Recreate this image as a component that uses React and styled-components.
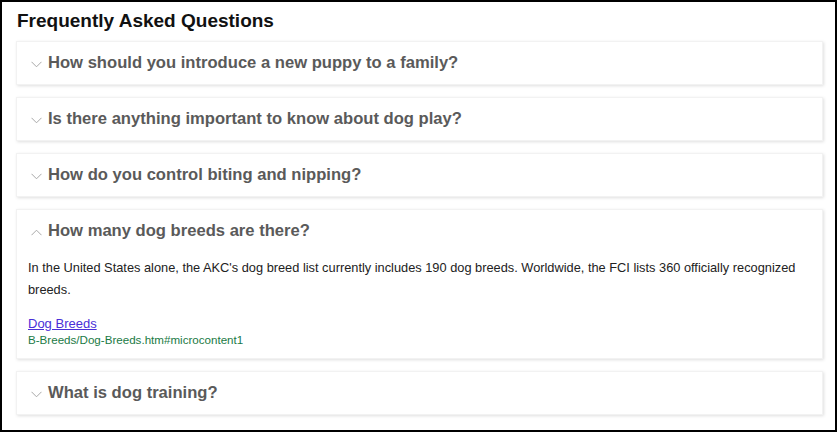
import React, { useState } from "react";
import styled, { createGlobalStyle } from "styled-components";

const Global = createGlobalStyle`
  html, body { margin: 0; padding: 0; background: #fff; }
  body { font-family: "Liberation Sans", Arial, sans-serif; }
  * { box-sizing: border-box; }
`;

const Frame = styled.div`
  width: 837px;
  height: 432px;
  border: 2px solid #000;
  padding: 8px 12px 0 14px;
  background: #fff;
`;

const Title = styled.h2`
  margin: 0 0 9px 1px;
  font-size: 19px;
  line-height: 22px;
  font-weight: bold;
  color: #111;
`;

const List = styled.div`
  display: flex;
  flex-direction: column;
  gap: 12px;
`;

const Card = styled.div`
  background: #fff;
  border: 1px solid #f2f2f2;
  box-shadow: 1px 1px 3px rgba(0, 0, 0, 0.13);
`;

const Header = styled.button`
  display: flex;
  align-items: center;
  gap: 6px;
  width: 100%;
  height: 42px;
  padding: 0 0 0 14px;
  border: 0;
  background: transparent;
  font-family: inherit;
  font-size: 16.6px;
  line-height: 20px;
  font-weight: bold;
  color: #5a5a5a;
  text-align: left;
  cursor: pointer;
`;

const Chevron = styled.svg`
  flex: none;
  width: 11px;
  height: 7px;
  margin-top: 3px;
  transform: ${(p) => (p.$open ? "rotate(180deg)" : "none")};
`;

const Body = styled.div`
  padding: 5px 12px 11px 11px;
`;

const Answer = styled.p`
  margin: 0 0 14px;
  font-size: 12.8px;
  line-height: 22px;
  color: #222;
`;

const Link = styled.a`
  display: block;
  font-size: 13px;
  line-height: 17px;
  color: #4a2fd8;
  text-decoration: underline;
  width: max-content;
`;

const Url = styled.div`
  font-size: 11.6px;
  line-height: 15px;
  color: #1a7a45;
`;

const faqs = [
  { q: "How should you introduce a new puppy to a family?" },
  { q: "Is there anything important to know about dog play?" },
  { q: "How do you control biting and nipping?" },
  {
    q: "How many dog breeds are there?",
    a: "In the United States alone, the AKC's dog breed list currently includes 190 dog breeds. Worldwide, the FCI lists 360 officially recognized breeds.",
    link: "Dog Breeds",
    url: "B-Breeds/Dog-Breeds.htm#microcontent1",
  },
  { q: "What is dog training?" },
];

function Item({ item, open, onToggle }) {
  return (
    <Card>
      <Header onClick={onToggle}>
        <Chevron $open={open} viewBox="0 0 11 7">
          <polyline points="0.5,0.8 5.5,5.8 10.5,0.8" fill="none" stroke="#a8a8a8" strokeWidth="1" />
        </Chevron>
        {item.q}
      </Header>
      {open && item.a && (
        <Body>
          <Answer>{item.a}</Answer>
          <Link href="#">{item.link}</Link>
          <Url>{item.url}</Url>
        </Body>
      )}
    </Card>
  );
}

export default function App() {
  const [open, setOpen] = useState(3);
  return (
    <>
      <Global />
      <Frame>
        <Title>Frequently Asked Questions</Title>
        <List>
          {faqs.map((f, i) => (
            <Item key={i} item={f} open={open === i} onToggle={() => setOpen(open === i ? -1 : i)} />
          ))}
        </List>
      </Frame>
    </>
  );
}
